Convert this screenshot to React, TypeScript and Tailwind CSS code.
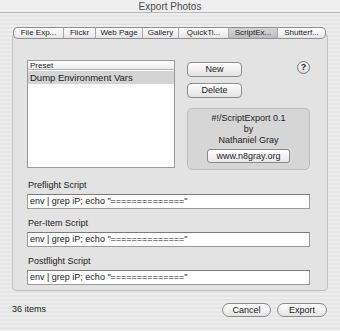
import React from 'react';

const tabs = [
    { label: 'File Exp...', w: 'w-[50px]' },
    { label: 'Flickr', w: 'w-[32px]' },
    { label: 'Web Page', w: 'w-[47px]' },
    { label: 'Gallery', w: 'w-[36px]' },
    { label: 'QuickTi...', w: 'w-[50px]' },
    { label: 'ScriptEx...', w: 'w-[49px]', active: true },
    { label: 'Shutterf...', w: 'w-[49px]' },
];

const scripts = ['Preflight Script', 'Per-Item Script', 'Postflight Script'];

const stripes = 'bg-[repeating-linear-gradient(0deg,#ededed_0px,#ededed_2px,#e5e5e5_2px,#e5e5e5_4px)]';

export default function App() {
    return (
        <div className={`w-[340px] h-[331px] overflow-hidden flex flex-col text-[#1a1a1a] ${stripes} font-['Lucida_Grande','Liberation_Sans',sans-serif]`}>
            {/* title bar */}
            <div className="h-[13px] shrink-0 flex items-center justify-center text-[10px] text-[#4a4a4a] bg-[#efefef] border-b border-[#b9b9b9]">
                Export Photos
            </div>

            {/* tabs */}
            <div className="relative z-10 mt-[14px] ml-[13px] flex h-[12px]">
                {tabs.map((t, i) => (
                    <div
                        key={t.label}
                        className={`${t.w} h-full flex items-center justify-center text-[8px] border-y border-[#8e8e8e] ${i === 0 ? 'border-l rounded-l-[5px]' : 'border-l border-l-[#a8a8a8]'} ${i === tabs.length - 1 ? 'border-r rounded-r-[5px]' : ''} ${t.active ? 'bg-[linear-gradient(#d6d6d6,#bdbdbd)]' : 'bg-[linear-gradient(#ffffff,#e6e6e6)]'}`}
                    >
                        {t.label}
                    </div>
                ))}
            </div>

            {/* panel */}
            <div className="-mt-[6px] mx-[12px] h-[258px] shrink-0 rounded-[4px] border border-[#c2c2c2] bg-[#e3e3e3] pt-[26px] pl-[14px] pr-[17px]">
                <div className="flex">
                    <div className="w-[148px] h-[108px] bg-white border border-[#9a9a9a] flex flex-col">
                        <div className="h-[9px] text-[8px] leading-[9px] pl-[2px] border-b border-[#b5b5b5] bg-[linear-gradient(#ffffff,#ececec)]">Preset</div>
                        <div className="h-[13px] mt-[1px] text-[9.5px] leading-[13px] pl-[2px] bg-[#d4d4d4]">Dump Environment Vars</div>
                    </div>

                    <div className="ml-[12px] flex-1 flex flex-col">
                        <div className="flex justify-between">
                            <div className="flex flex-col gap-[6px] pt-[2px]">
                                <button className="w-[55px] h-[15px] rounded-[4px] border border-[#8d8d8d] bg-[linear-gradient(#ffffff,#e2e2e2)] text-[9px] leading-none">New</button>
                                <button className="w-[55px] h-[15px] rounded-[4px] border border-[#8d8d8d] bg-[linear-gradient(#ffffff,#e2e2e2)] text-[9px] leading-none">Delete</button>
                            </div>
                            <div className="mt-[1px] w-[13px] h-[13px] rounded-full border border-[#7a7a7a] bg-[linear-gradient(#ffffff,#dcdcdc)] flex items-center justify-center text-[9px] font-bold leading-none">?</div>
                        </div>
                        <div className="mt-[10px] h-[62px] rounded-[5px] border border-[#bdbdbd] bg-[#d6d6d6] flex flex-col items-center pt-[4px] text-[9px] leading-[11px]">
                            <span>#!/ScriptExport 0.1</span>
                            <span>by</span>
                            <span>Nathaniel Gray</span>
                            <div className="mt-[3px] w-[83px] h-[14px] rounded-[3px] border border-[#8a8a8a] bg-[linear-gradient(#ffffff,#e8e8e8)] flex items-center justify-center text-[9px]">www.n8gray.org</div>
                        </div>
                    </div>
                </div>

                {scripts.map((s, i) => (
                    <div key={s} className={i === 0 ? 'mt-[8px]' : 'mt-[7px]'}>
                        <div className="h-[15px] text-[9px] leading-[15px] pl-[1px]">{s}</div>
                        <div className="mt-[1px] h-[15px] bg-white border border-[#9a9a9a] border-t-[#7a7a7a] text-[9px] leading-[13px] pl-[2px]">
                            env | grep iP; echo "=============="
                        </div>
                    </div>
                ))}
            </div>

            {/* bottom bar */}
            <div className="mt-[12px] flex items-center pl-[12px] pr-[13px]">
                <span className="text-[9px]">36 items</span>
                <div className="ml-auto flex gap-[6px]">
                    <button className="w-[49px] h-[14px] rounded-full border border-[#8a8a8a] bg-[linear-gradient(#ffffff,#e4e4e4)] text-[9px] leading-none">Cancel</button>
                    <button className="w-[50px] h-[14px] rounded-full border border-[#8a8a8a] bg-[linear-gradient(#ffffff,#e4e4e4)] text-[9px] leading-none">Export</button>
                </div>
            </div>
        </div>
    );
}
